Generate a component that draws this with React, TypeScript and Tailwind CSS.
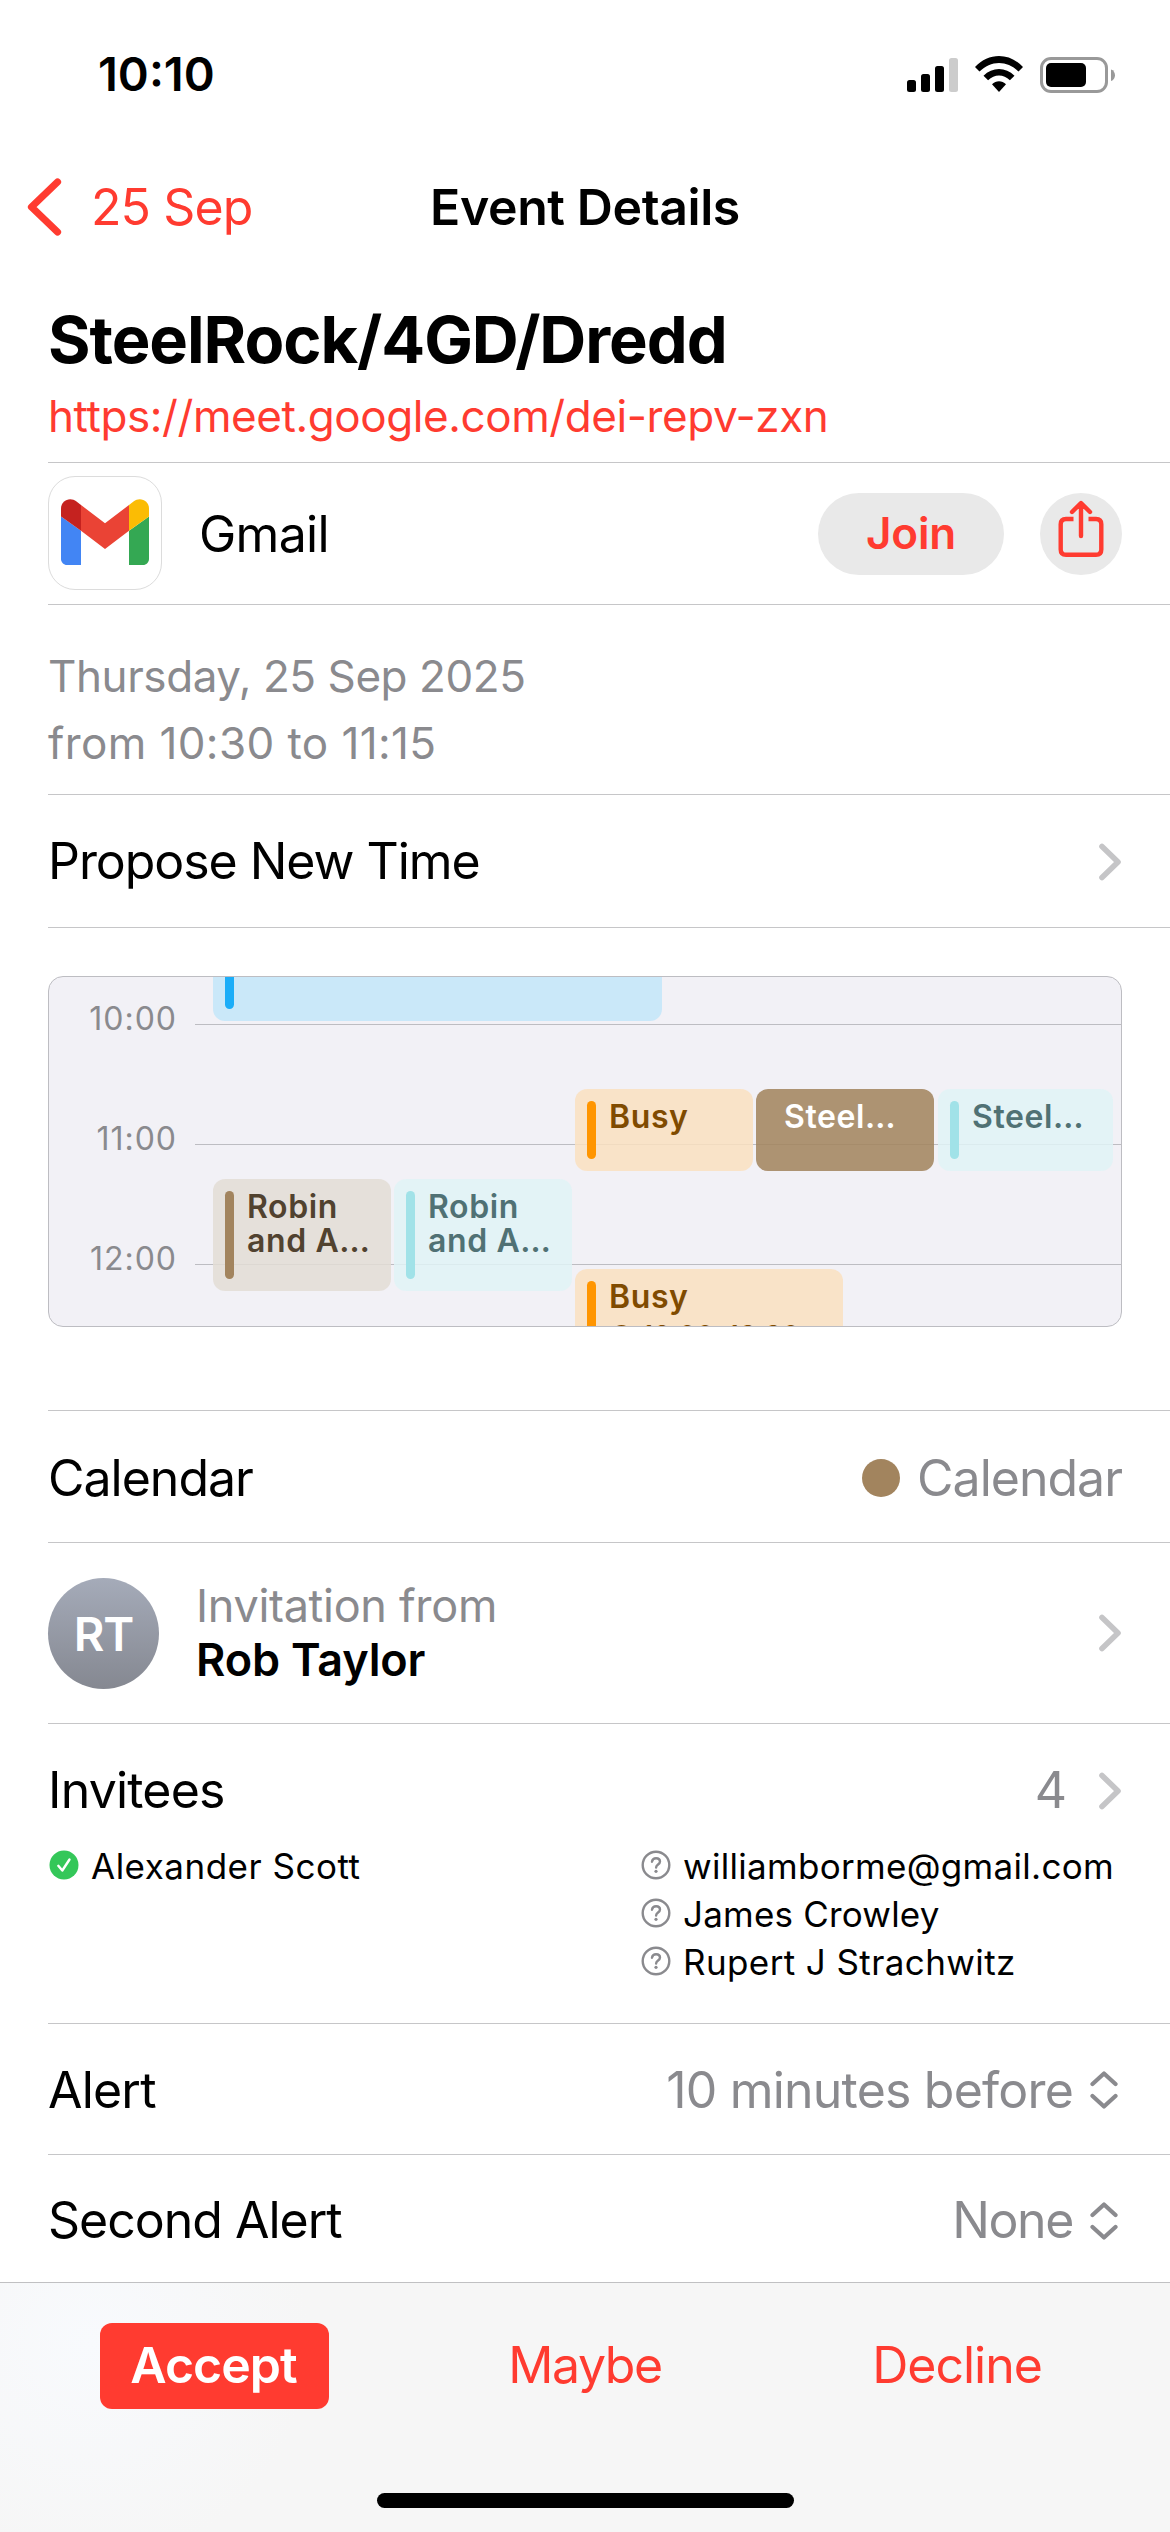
import clsx from 'clsx'

interface CalendarBlock {
  title: string
  box: string
  bar?: string
  text?: string
  time?: string
}

const hours = ['10:00', '11:00', '12:00']

const blocks: CalendarBlock[] = [
  { title: '', box: 'left-[164px] top-[-40px] w-[449px] h-[84px] bg-[#c5e7fa]/90', bar: 'bg-[#1badf8]' },
  { title: 'Busy', box: 'left-[526px] top-[112px] w-[178px] h-[82px] bg-[#fae1c0]/85', bar: 'bg-[#ff9500]', text: 'text-[#804b00]' },
  { title: 'Steel…', box: 'left-[707px] top-[112px] w-[178px] h-[82px] bg-[#a2845e]/87', text: 'text-white' },
  { title: 'Steel…', box: 'left-[889px] top-[112px] w-[175px] h-[82px] bg-[#e1f3f6]/85', bar: 'bg-[#a1e2e8]', text: 'text-[#507174]' },
  { title: 'Robin\nand A…', box: 'left-[164px] top-[202px] w-[178px] h-[112px] bg-[#e3ddd5]/85', bar: 'bg-[#a2845e]', text: 'text-[#51422f]' },
  { title: 'Robin\nand A…', box: 'left-[345px] top-[202px] w-[178px] h-[112px] bg-[#e1f3f6]/85', bar: 'bg-[#a1e2e8]', text: 'text-[#507174]' },
  { title: 'Busy', box: 'left-[526px] top-[292px] w-[268px] h-[100px] bg-[#fae1c0]/85', bar: 'bg-[#ff9500]', text: 'text-[#804b00]', time: '12:00–13:30' },
]

const pending = [
  { name: 'williamborme@gmail.com', track: 'tracking-[0.3px]' },
  { name: 'James Crowley', track: 'tracking-[0.2px]' },
  { name: 'Rupert J Strachwitz', track: 'tracking-[0.4px]' },
]

function Chevron() {
  return (
    <svg className="w-[24px] h-[38px] shrink-0" viewBox="0 0 24 38" fill="none">
      <path d="M4 3.500 20 19 4 34.500" stroke="#c5c5c7" strokeWidth="5.600" strokeLinecap="round" strokeLinejoin="round" />
    </svg>
  )
}

function UpDown() {
  return (
    <svg className="w-[28px] h-[38px] shrink-0" viewBox="0 0 28 38" fill="none">
      <path d="M2.500 13 14 2.500 25.500 13M2.500 25 14 35.500 25.500 25" stroke="#8a8a8e" strokeWidth="4.200" strokeLinecap="round" strokeLinejoin="round" />
    </svg>
  )
}

function Unknown() {
  return (
    <svg className="mb-[3px] w-[30px] h-[30px] shrink-0" viewBox="0 0 30 30" fill="none" stroke="#8a8a8e">
      <circle cx="15" cy="15" r="13.300" strokeWidth="2.400" />
      <path d="M11 11.700c.3-2.200 1.900-3.500 4.100-3.500 2.300 0 3.900 1.300 3.900 3.300 0 3-3.900 3-3.900 6" strokeWidth="2.400" strokeLinecap="round" />
      <circle cx="15" cy="21.300" r="1.600" fill="#8a8a8e" stroke="none" />
    </svg>
  )
}

function Accepted() {
  return (
    <svg className="mb-[3px] w-[30px] h-[30px] shrink-0" viewBox="0 0 30 30" fill="none">
      <circle cx="15" cy="15" r="14.500" fill="#34c759" />
      <path d="m9.300 15.800 4 4.700 7.200-11" stroke="#fff" strokeWidth="2.400" strokeLinecap="round" strokeLinejoin="round" />
    </svg>
  )
}

function GmailLogo() {
  return (
    <svg className="mb-[2px] w-[88px] h-[66px]" viewBox="0 0 88 66">
      <path d="M6 66h14V31.700L0 17.500V60c0 3.300 2.700 6 6 6z" fill="#4285f4" />
      <path d="M68 66h14c3.300 0 6-2.700 6-6V17.500L68 31.700z" fill="#34a853" />
      <path d="M68 6v25.700l20-14.200V9.500C88 1.500 79-2.700 72.500 2.400z" fill="#fbbc04" />
      <path d="M20 31.700V6l24 18.200L68 6v25.700L44 50z" fill="#ea4335" />
      <path d="M0 9.500v8l20 14.200V6l-4.500-3.600C9-2.700 0 1.500 0 9.500z" fill="#c5221f" />
    </svg>
  )
}

function StatusBar() {
  return (
    <div className="h-[148px] flex justify-between pl-[98px] pr-[54px] pt-[49px]">
      <span className="text-[47px] leading-[50px] font-semibold">10:10</span>
      <div className="flex h-[50px] items-center">
        <svg className="w-[209px] h-[38px]" viewBox="0 0 209 38">
          <rect x="0" y="25" width="9" height="12" rx="2.500" />
          <rect x="14" y="19" width="9" height="18" rx="2.500" />
          <rect x="28" y="11" width="9" height="26" rx="2.500" />
          <rect x="42" y="3" width="9" height="34" rx="2.500" fill="#ccc" />
          <path d="M68 12c13.500-14.700 34.500-14.700 48 0l-4.500 4.600c-11-11.600-28-11.600-39 0z" />
          <path d="M76.500 20.700c8.800-9 22.200-9 31 0l-4.600 4.600c-6.300-6.300-15.500-6.300-21.800 0z" />
          <path d="M85 29.300c4-4 10-4 14 0l-7 7.700z" />
          <rect x="134.500" y="3.500" width="65" height="33" rx="9.500" fill="none" stroke="#999" strokeWidth="3" />
          <rect x="139" y="8" width="40" height="24" rx="5" />
          <path d="M204 14.500c5.300 1.500 5.300 10 0 11.500z" fill="#999" />
        </svg>
      </div>
    </div>
  )
}

function DayPreview() {
  return (
    <div className="relative mt-[48px] ml-[48px] w-[1074px] h-[351px] shrink-0 overflow-hidden rounded-[15px] border border-[#bdbdc2] bg-[#f2f1f6]">
      <div className="flex flex-col pt-[24px]">
        {hours.map(hour => (
          <div key={hour} className="h-[120px] flex">
            <span className="w-[128px] text-right text-[32px] leading-[36px] tracking-[1px] text-[#8a8a8e]">{hour}</span>
            <div className="mt-[23px] ml-[18px] h-px flex-1 bg-[#bdbdc2]" />
          </div>
        ))}
      </div>
      {blocks.map((block, i) => (
        <div key={i} className={clsx('absolute flex overflow-hidden rounded-[12px] pl-[12px] py-[12px]', block.box)}>
          <div className={clsx('w-[9px] shrink-0 rounded-full', block.bar)} />
          <div className={clsx('mt-[-1px] whitespace-pre', block.bar ? 'ml-[13px]' : 'ml-[7px]', block.text)}>
            <p className="text-[32px] leading-[33.500px] font-semibold tracking-[0.6px]">{block.title}</p>
            {block.time && (
              <div className="mt-[5px] flex items-center gap-[10px] text-[28px] leading-[34px]">
                <span className="ml-[2px] size-[21px] rounded-full border-2 border-current" />
                {block.time}
              </div>
            )}
          </div>
        </div>
      ))}
    </div>
  )
}

export default function App() {
  return (
    <div className="w-[1170px] h-[2532px] flex flex-col overflow-hidden bg-white text-black font-['Inter',sans-serif]">
      <StatusBar />

      <header className="h-[118px] grid grid-cols-[1fr_auto_1fr] items-center px-[26px]">
        <div className="flex items-center text-[#ff3b30]">
          <svg className="w-[38px] h-[60px]" viewBox="0 0 38 60" fill="none">
            <path d="M31.500 5 5.500 30 31.500 55" stroke="#ff3b30" strokeWidth="7.200" strokeLinecap="round" strokeLinejoin="round" />
          </svg>
          <span className="ml-[27px] text-[50px] tracking-[-0.9px]">25 Sep</span>
        </div>
        <h1 className="text-[50px] font-semibold tracking-[-0.4px] whitespace-nowrap">Event Details</h1>
      </header>

      <section className="ml-[48px] h-[197px] border-b border-[#c6c6c8] pt-[38px]">
        <h2 className="text-[65px] leading-[72px] font-bold tracking-[-1.05px]">SteelRock/4GD/Dredd</h2>
        <a className="mt-[10px] block text-[44px] leading-[60px] tracking-[-0.42px] text-[#ff3b30]">https://meet.google.com/dei-repv-zxn</a>
      </section>

      <section className="ml-[48px] h-[142px] pr-[48px] pb-[2px] flex items-center border-b border-[#c6c6c8]">
        <div className="size-[114px] flex items-center justify-center rounded-[27px] border border-[#dcdcdc]">
          <GmailLogo />
        </div>
        <span className="mt-[3px] ml-[37px] text-[50px] tracking-[-0.7px]">Gmail</span>
        <button className="mt-[2px] ml-auto w-[186px] h-[82px] pb-[2px] rounded-full bg-[#e9e9e9] text-[44px] font-semibold tracking-[-0.2px] text-[#ff3b30]">Join</button>
        <button className="mt-[2px] ml-[36px] size-[82px] flex items-center justify-center rounded-full bg-[#e9e9e9]">
          <svg className="mb-[10px] w-[46px] h-[58px]" viewBox="0 0 46 58" fill="none" stroke="#ff3b30" strokeWidth="4.400" strokeLinecap="round" strokeLinejoin="round">
            <path d="M15.500 19H8C4.500 19 2.700 20.800 2.700 24.300V49.500c0 3.500 1.800 5.300 5.300 5.300h30c3.500 0 5.300-1.800 5.300-5.300V24.300c0-3.500-1.800-5.300-5.300-5.300H30.500" strokeLinecap="butt" />
            <path d="M23 36V3.500M14 12l9-9 9 9" />
          </svg>
        </button>
      </section>

      <section className="ml-[48px] h-[190px] pt-[38px] border-b border-[#c6c6c8] text-[44px] leading-[67px] text-[#8a8a8e]">
        <p className="tracking-[-0.42px]">Thursday, 25 Sep 2025</p>
        <p className="tracking-[0.4px]">from 10:30 to 11:15</p>
      </section>

      <section className="ml-[48px] h-[133px] pr-[48px] pt-px flex items-center justify-between border-b border-[#c6c6c8]">
        <span className="text-[50px] tracking-[-1.05px]">Propose New Time</span>
        <Chevron />
      </section>

      <DayPreview />

      <section className="mt-[83px] ml-[48px] h-[133px] pr-[48px] pt-[3px] flex items-center border-y border-[#c6c6c8]">
        <span className="text-[50px] tracking-[-1px]">Calendar</span>
        <span className="ml-auto mr-[17px] size-[38px] rounded-full bg-[#a2845e]" />
        <span className="text-[50px] tracking-[-1px] text-[#8a8a8e]">Calendar</span>
      </section>

      <section className="ml-[48px] h-[181px] pr-[48px] flex items-center border-b border-[#c6c6c8]">
        <div className="size-[111px] pt-[2px] flex items-center justify-center rounded-full bg-gradient-to-b from-[#a5abb9] to-[#858891] text-[47px] font-semibold tracking-[-1px] text-white">RT</div>
        <div className="ml-[37px] text-[45px] leading-[54px]">
          <p className="tracking-[-0.3px] text-[#8a8a8e]">Invitation from</p>
          <p className="font-semibold tracking-[-0.15px]">Rob Taylor</p>
        </div>
        <span className="ml-auto flex">
          <Chevron />
        </span>
      </section>

      <section className="ml-[48px] h-[300px] pr-[48px] border-b border-[#c6c6c8]">
        <div className="h-[118px] pt-[15px] flex items-center">
          <span className="text-[50px] tracking-[-0.8px]">Invitees</span>
          <span className="ml-auto mr-[31px] text-[50px] text-[#8a8a8e]">4</span>
          <Chevron />
        </div>
        <div className="grid grid-cols-[592px_1fr] text-[35px] leading-[48px]">
          <div className="flex h-[48px] items-center pl-px">
            <Accepted />
            <span className="ml-[12px] tracking-[0.5px] whitespace-nowrap">Alexander Scott</span>
          </div>
          <div>
            {pending.map(person => (
              <div key={person.name} className="flex h-[48px] items-center pl-px">
                <Unknown />
                <span className={clsx('ml-[12px] whitespace-nowrap', person.track)}>{person.name}</span>
              </div>
            ))}
          </div>
        </div>
      </section>

      <section className="ml-[48px] h-[131px] pr-[52px] pt-[2px] flex items-center border-b border-[#c6c6c8]">
        <span className="text-[50px] tracking-[-0.8px]">Alert</span>
        <span className="ml-auto mr-[17px] text-[50px] tracking-[-0.8px] text-[#8a8a8e]">10 minutes before</span>
        <UpDown />
      </section>

      <section className="ml-[48px] h-[127px] pr-[52px] pt-[4px] flex items-center">
        <span className="text-[50px] tracking-[-1px]">Second Alert</span>
        <span className="ml-auto mr-[17px] text-[50px] tracking-[-1.4px] text-[#8a8a8e]">None</span>
        <UpDown />
      </section>

      <footer className="flex-1 flex flex-col items-center border-t border-[#c0c0c2] bg-[#f6f6f6] bg-[radial-gradient(circle_at_90px_60px,#f8fafd_0,#f6f6f6_220px)]">
        <div className="mt-[40px] w-full h-[86px] flex items-center text-[50px] text-[#ff3b30]">
          <button className="ml-[100px] w-[229px] h-[86px] pr-[2px] pb-[2px] rounded-[12px] bg-[#ff3b30] font-semibold tracking-[-1px] text-white">Accept</button>
          <button className="ml-[151px] w-[210px] pb-[2px] tracking-[-1.4px]">Maybe</button>
          <button className="ml-[162px] w-[210px] pb-[2px] tracking-[-1px]">Decline</button>
        </div>
        <div className="mt-[84px] w-[417px] h-[15px] rounded-full bg-black" />
      </footer>
    </div>
  )
}
